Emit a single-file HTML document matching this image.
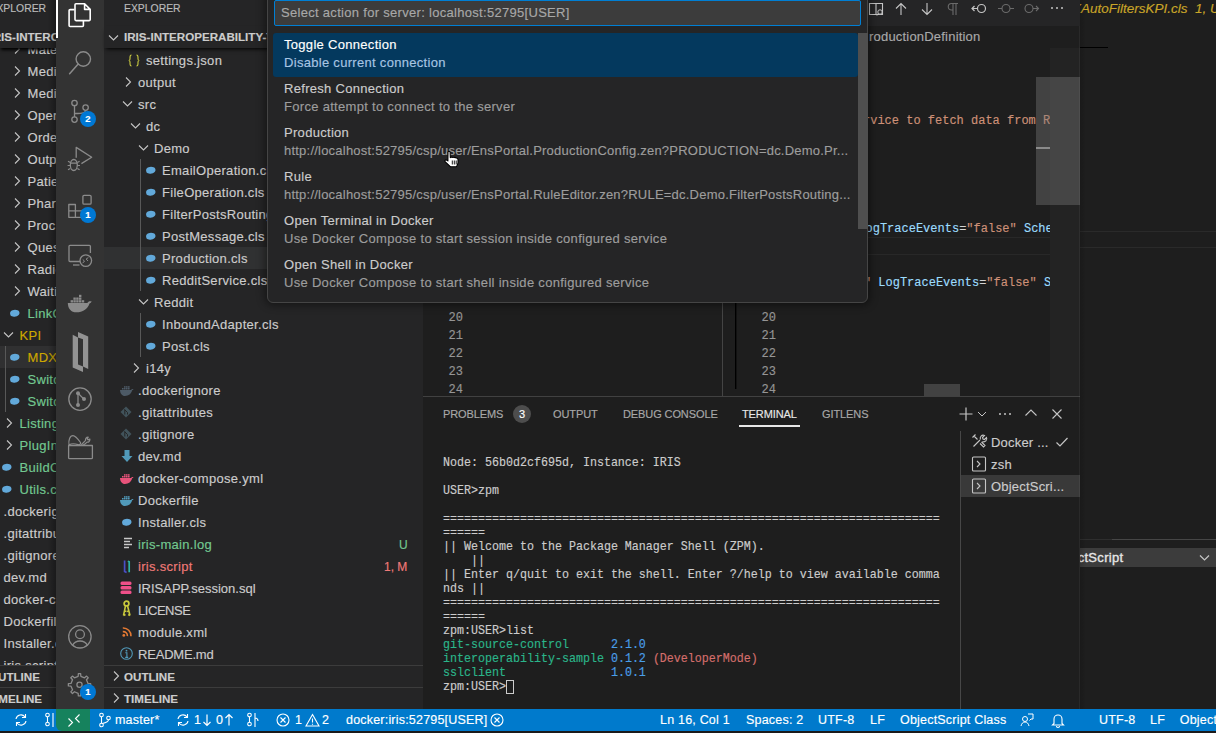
<!DOCTYPE html><html><head><meta charset="utf-8"><style>
*{box-sizing:border-box;margin:0;padding:0}
html,body{width:1216px;height:733px;overflow:hidden;background:#1e1e1e;font-family:"Liberation Sans",sans-serif;color:#cccccc}
.a{position:absolute;white-space:pre}
.m{font-family:"Liberation Mono",monospace}
.r{position:absolute;height:22px;line-height:22px;font-size:13px;color:#cccccc;white-space:pre}
svg{position:absolute;overflow:visible}
.a,.r{-webkit-text-stroke:0.15px currentColor}
</style></head><body>
<div class="a" style="left:0px;top:0px;width:1216px;height:733px;background:#1e1e1e;"></div>
<div class="a" style="left:0px;top:0px;width:56px;height:709px;background:#252526;"></div>
<div class="a" style="left:-10.5px;top:1px;height:16px;line-height:16px;font-size:10.4px;color:#bbbbbb">EXPLORER</div>
<div class="a" style="left:0px;top:346px;width:56px;height:22px;background:#303031;"></div>
<svg width="8" height="12" style="left:13px;top:43px"><path d="M2 1.5L6.5 6 2 10.5" stroke="#c5c5c5" stroke-width="1.1" fill="none"/></svg>
<div class="r" style="left:27.5px;top:39px;color:#cccccc;letter-spacing:0.3px">Mate</div>
<svg width="8" height="12" style="left:13px;top:65px"><path d="M2 1.5L6.5 6 2 10.5" stroke="#c5c5c5" stroke-width="1.1" fill="none"/></svg>
<div class="r" style="left:27.5px;top:61px;color:#cccccc;letter-spacing:0.3px">Medi</div>
<svg width="8" height="12" style="left:13px;top:87px"><path d="M2 1.5L6.5 6 2 10.5" stroke="#c5c5c5" stroke-width="1.1" fill="none"/></svg>
<div class="r" style="left:27.5px;top:83px;color:#cccccc;letter-spacing:0.3px">Medi</div>
<svg width="8" height="12" style="left:13px;top:109px"><path d="M2 1.5L6.5 6 2 10.5" stroke="#c5c5c5" stroke-width="1.1" fill="none"/></svg>
<div class="r" style="left:27.5px;top:105px;color:#cccccc;letter-spacing:0.3px">Oper</div>
<svg width="8" height="12" style="left:13px;top:131px"><path d="M2 1.5L6.5 6 2 10.5" stroke="#c5c5c5" stroke-width="1.1" fill="none"/></svg>
<div class="r" style="left:27.5px;top:127px;color:#cccccc;letter-spacing:0.3px">Orde</div>
<svg width="8" height="12" style="left:13px;top:153px"><path d="M2 1.5L6.5 6 2 10.5" stroke="#c5c5c5" stroke-width="1.1" fill="none"/></svg>
<div class="r" style="left:27.5px;top:149px;color:#cccccc;letter-spacing:0.3px">Outp</div>
<svg width="8" height="12" style="left:13px;top:175px"><path d="M2 1.5L6.5 6 2 10.5" stroke="#c5c5c5" stroke-width="1.1" fill="none"/></svg>
<div class="r" style="left:27.5px;top:171px;color:#cccccc;letter-spacing:0.3px">Patie</div>
<svg width="8" height="12" style="left:13px;top:197px"><path d="M2 1.5L6.5 6 2 10.5" stroke="#c5c5c5" stroke-width="1.1" fill="none"/></svg>
<div class="r" style="left:27.5px;top:193px;color:#cccccc;letter-spacing:0.3px">Phar</div>
<svg width="8" height="12" style="left:13px;top:219px"><path d="M2 1.5L6.5 6 2 10.5" stroke="#c5c5c5" stroke-width="1.1" fill="none"/></svg>
<div class="r" style="left:27.5px;top:215px;color:#cccccc;letter-spacing:0.3px">Proc</div>
<svg width="8" height="12" style="left:13px;top:241px"><path d="M2 1.5L6.5 6 2 10.5" stroke="#c5c5c5" stroke-width="1.1" fill="none"/></svg>
<div class="r" style="left:27.5px;top:237px;color:#cccccc;letter-spacing:0.3px">Ques</div>
<svg width="8" height="12" style="left:13px;top:263px"><path d="M2 1.5L6.5 6 2 10.5" stroke="#c5c5c5" stroke-width="1.1" fill="none"/></svg>
<div class="r" style="left:27.5px;top:259px;color:#cccccc;letter-spacing:0.3px">Radio</div>
<svg width="8" height="12" style="left:13px;top:285px"><path d="M2 1.5L6.5 6 2 10.5" stroke="#c5c5c5" stroke-width="1.1" fill="none"/></svg>
<div class="r" style="left:27.5px;top:281px;color:#cccccc;letter-spacing:0.3px">Waiti</div>
<svg width="11" height="8" viewBox="0 0 11 8" style="left:9px;top:309px"><path d="M1.2 5.2C0.6 3.6 1.8 1.6 3.6 1.2 5 0.4 7.4 0.5 8.6 1.3 10.2 1.9 10.8 3.4 10.4 4.8 10 6.3 8.4 7.3 6.6 7.5 4.8 7.9 2.6 7.7 1.6 6.6Z" fill="#62a9da"/></svg>
<div class="r" style="left:27.5px;top:303px;color:#73c991;letter-spacing:0.3px">LinkO</div>
<svg width="12" height="8" style="left:3px;top:331px"><path d="M1 1.5L5.5 6 10 1.5" stroke="#c5c5c5" stroke-width="1.1" fill="none"/></svg>
<div class="r" style="left:19.5px;top:325px;color:#cca700;letter-spacing:0.3px">KPI</div>
<svg width="11" height="8" viewBox="0 0 11 8" style="left:9px;top:353px"><path d="M1.2 5.2C0.6 3.6 1.8 1.6 3.6 1.2 5 0.4 7.4 0.5 8.6 1.3 10.2 1.9 10.8 3.4 10.4 4.8 10 6.3 8.4 7.3 6.6 7.5 4.8 7.9 2.6 7.7 1.6 6.6Z" fill="#62a9da"/></svg>
<div class="r" style="left:27.5px;top:347px;color:#cca700;letter-spacing:0.3px">MDX</div>
<svg width="11" height="8" viewBox="0 0 11 8" style="left:9px;top:375px"><path d="M1.2 5.2C0.6 3.6 1.8 1.6 3.6 1.2 5 0.4 7.4 0.5 8.6 1.3 10.2 1.9 10.8 3.4 10.4 4.8 10 6.3 8.4 7.3 6.6 7.5 4.8 7.9 2.6 7.7 1.6 6.6Z" fill="#62a9da"/></svg>
<div class="r" style="left:27.5px;top:369px;color:#73c991;letter-spacing:0.3px">Switc</div>
<svg width="11" height="8" viewBox="0 0 11 8" style="left:9px;top:397px"><path d="M1.2 5.2C0.6 3.6 1.8 1.6 3.6 1.2 5 0.4 7.4 0.5 8.6 1.3 10.2 1.9 10.8 3.4 10.4 4.8 10 6.3 8.4 7.3 6.6 7.5 4.8 7.9 2.6 7.7 1.6 6.6Z" fill="#62a9da"/></svg>
<div class="r" style="left:27.5px;top:391px;color:#73c991;letter-spacing:0.3px">Switc</div>
<svg width="8" height="12" style="left:5px;top:417px"><path d="M2 1.5L6.5 6 2 10.5" stroke="#c5c5c5" stroke-width="1.1" fill="none"/></svg>
<div class="r" style="left:19.5px;top:413px;color:#73c991;letter-spacing:0.3px">Listing</div>
<svg width="8" height="12" style="left:5px;top:439px"><path d="M2 1.5L6.5 6 2 10.5" stroke="#c5c5c5" stroke-width="1.1" fill="none"/></svg>
<div class="r" style="left:19.5px;top:435px;color:#73c991;letter-spacing:0.3px">PlugIn</div>
<svg width="11" height="8" viewBox="0 0 11 8" style="left:1px;top:463px"><path d="M1.2 5.2C0.6 3.6 1.8 1.6 3.6 1.2 5 0.4 7.4 0.5 8.6 1.3 10.2 1.9 10.8 3.4 10.4 4.8 10 6.3 8.4 7.3 6.6 7.5 4.8 7.9 2.6 7.7 1.6 6.6Z" fill="#62a9da"/></svg>
<div class="r" style="left:19.5px;top:457px;color:#73c991;letter-spacing:0.3px">BuildC</div>
<svg width="11" height="8" viewBox="0 0 11 8" style="left:1px;top:485px"><path d="M1.2 5.2C0.6 3.6 1.8 1.6 3.6 1.2 5 0.4 7.4 0.5 8.6 1.3 10.2 1.9 10.8 3.4 10.4 4.8 10 6.3 8.4 7.3 6.6 7.5 4.8 7.9 2.6 7.7 1.6 6.6Z" fill="#62a9da"/></svg>
<div class="r" style="left:19.5px;top:479px;color:#73c991;letter-spacing:0.3px">Utils.c</div>
<div class="r" style="left:3.5px;top:501px;color:#cccccc;letter-spacing:0.3px">.dockerig</div>
<div class="r" style="left:3.5px;top:523px;color:#cccccc;letter-spacing:0.3px">.gitattribu</div>
<div class="r" style="left:3.5px;top:545px;color:#cccccc;letter-spacing:0.3px">.gitignore</div>
<div class="r" style="left:3.5px;top:567px;color:#cccccc;letter-spacing:0.3px">dev.md</div>
<div class="r" style="left:3.5px;top:589px;color:#cccccc;letter-spacing:0.3px">docker-c</div>
<div class="r" style="left:3.5px;top:611px;color:#cccccc;letter-spacing:0.3px">Dockerfil</div>
<div class="r" style="left:3.5px;top:633px;color:#cccccc;letter-spacing:0.3px">Installer.c</div>
<div class="r" style="left:3.5px;top:655px;color:#cccccc;letter-spacing:0.3px">iris.script</div>
<div class="a" style="left:5px;top:346px;width:1px;height:66px;background:#585858;"></div>
<div class="a" style="left:0px;top:26px;width:56px;height:22px;background:#252526;box-shadow:0 3px 3px -1px #000"></div>
<div class="a" style="left:-10.5px;top:26px;height:22px;line-height:22px;font-size:11.6px;font-weight:bold;color:#cccccc">IRIS-INTEROPERABILITY</div>
<div class="a" style="left:0px;top:665px;width:56px;height:22px;background:#252526;border-top:1px solid #3c3c3c"></div>
<div class="a" style="left:-11px;top:666px;height:22px;line-height:22px;font-size:11.6px;font-weight:bold;color:#cccccc">OUTLINE</div>
<div class="a" style="left:0px;top:687px;width:56px;height:22px;background:#252526;border-top:1px solid #3c3c3c"></div>
<div class="a" style="left:-12px;top:688px;height:22px;line-height:22px;font-size:11.6px;font-weight:bold;color:#cccccc">TIMELINE</div>
<div class="a" style="left:0px;top:709px;width:70px;height:22px;background:#007acc;"></div>
<div class="a" style="left:0px;top:731px;width:1216px;height:2px;background:#1a1a1a;"></div>
<div class="a" style="left:1080px;top:0px;width:136px;height:709px;background:#1e1e1e;"></div>
<div class="a" style="left:1072px;top:0px;font-size:13.5px;line-height:18px;font-style:italic;color:#c9a528">XAutoFiltersKPI.cls&nbsp; 1, U</div>
<div class="a" style="left:1080px;top:231px;width:136px;height:1px;background:#2a2a2a;"></div>
<div class="a" style="left:1080px;top:247px;width:136px;height:1px;background:#2a2a2a;"></div>
<div class="a" style="left:1080px;top:47px;width:28px;height:1px;background:#000;"></div>
<div class="a" style="left:1080px;top:539px;width:136px;height:1px;background:#464646;"></div>
<div class="a" style="left:1080px;top:539px;width:32px;height:1px;background:#2e2e2e;"></div>
<div class="a" style="left:1080px;top:548px;width:136px;height:19px;background:#3c3c3c;"></div>
<div class="a" style="left:1049px;top:549px;font-size:13px;line-height:18px;color:#e6e6e6;letter-spacing:0.3px;-webkit-text-stroke:0.35px #e6e6e6">ObjectScript</div>
<svg width="12" height="8" style="left:1199px;top:554px"><path d="M1 1.5L5.5 6 10 1.5" stroke="#c5c5c5" stroke-width="1.2" fill="none"/></svg>
<div class="a" style="left:1066px;top:709px;width:150px;height:22px;background:#007acc;"></div>
<div class="a" style="left:48px;top:0px;width:8px;height:709px;background:linear-gradient(to right,rgba(0,0,0,0),rgba(0,0,0,0.3));"></div>
<div class="a" style="left:1080px;top:0px;width:6px;height:709px;background:linear-gradient(to left,rgba(0,0,0,0),rgba(0,0,0,0.15));"></div>
<div class="a" style="left:56px;top:0px;width:48px;height:709px;background:#333333;"></div>
<div class="a" style="left:56px;top:0px;width:2px;height:38px;background:#ffffff;"></div>
<svg width="1216" height="733" style="left:0;top:0"><path d="M76 3.8h8.6l5.6 5.6v10.2a1 1 0 0 1-1 1H76a1 1 0 0 1-1-1V4.8a1 1 0 0 1 1-1z M84.6 3.8v5.6h5.6" fill="none" stroke="#fff" stroke-width="1.6" stroke-linejoin="round"/><path d="M74.5 9.6h-4.4a1 1 0 0 0-1 1v14.9a1 1 0 0 0 1 1h12.3a1 1 0 0 0 1-1v-4.6" fill="none" stroke="#fff" stroke-width="1.6" stroke-linejoin="round"/><circle cx="83.3" cy="59" r="7.2" fill="none" stroke="#8b8b8b" stroke-width="1.4"/><path d="M78.2 64.1L69.6 73.8" stroke="#8b8b8b" stroke-width="1.5" stroke-linecap="round"/><circle cx="74.5" cy="103" r="2.7" fill="none" stroke="#8b8b8b" stroke-width="1.3"/><circle cx="74.5" cy="119.6" r="2.7" fill="none" stroke="#8b8b8b" stroke-width="1.3"/><circle cx="85.6" cy="107.6" r="2.7" fill="none" stroke="#8b8b8b" stroke-width="1.3"/><path d="M74.5 105.7v11.2M85.6 110.3c0 2.5-2 3-11 3.2" fill="none" stroke="#8b8b8b" stroke-width="1.3"/><path d="M76.2 157.7V147.4L91.7 157.2 81.4 163.6" fill="none" stroke="#8b8b8b" stroke-width="1.3" stroke-linejoin="round"/><ellipse cx="73.8" cy="165" rx="3.5" ry="5.5" fill="none" stroke="#8b8b8b" stroke-width="1.3"/><path d="M70.5 163.2h6.6M68 161.3l2.3 1.3M79.6 161.3l-2.3 1.3M67.6 165.5h2.6M77.4 165.5h2.6M68 169.7l2.3-1.3M79.6 169.7l-2.3-1.3" fill="none" stroke="#8b8b8b" stroke-width="1.2"/><path d="M68.8 204.5h6.6v6.4h6.4v6.4H68.8z M68.8 210.9h6.6v6.4" fill="none" stroke="#8b8b8b" stroke-width="1.3" stroke-linejoin="round"/><rect x="82.9" y="195.3" width="8.2" height="8.8" rx="1.2" fill="none" stroke="#8b8b8b" stroke-width="1.3"/><path d="M80 261.5H70a1 1 0 0 1-1-1V246.3a1 1 0 0 1 1-1h19.4a1 1 0 0 1 1 1V253" fill="none" stroke="#8b8b8b" stroke-width="1.3"/><path d="M73 265h6.5" stroke="#8b8b8b" stroke-width="1.3"/><circle cx="85.8" cy="260.6" r="5.8" fill="#333333" stroke="#8b8b8b" stroke-width="1.3"/><path d="M82.8 259.6l1.7 1.4-1.9 2.2M88.3 257.6l-2.2 1.4 1.9 2" fill="none" stroke="#8b8b8b" stroke-width="1"/><path d="M67.8 303h19.6c.8-1.5 2.3-2 4.3-1.4-.5 1-1.2 1.6-2.2 1.8C87.8 309 82.5 312.3 76.5 312.3c-5.5 0-8.5-3.5-8.7-9.3z" fill="#8b8b8b"/><rect x="70.6" y="300.2" width="2.4" height="2.3" fill="#8b8b8b"/><rect x="73.4" y="300.2" width="2.4" height="2.3" fill="#8b8b8b"/><rect x="76.2" y="300.2" width="2.4" height="2.3" fill="#8b8b8b"/><rect x="79" y="300.2" width="2.4" height="2.3" fill="#8b8b8b"/><rect x="81.8" y="300.2" width="2.4" height="2.3" fill="#8b8b8b"/><rect x="73.4" y="297.5" width="2.4" height="2.3" fill="#8b8b8b"/><rect x="76.2" y="297.5" width="2.4" height="2.3" fill="#8b8b8b"/><rect x="79" y="297.5" width="2.4" height="2.3" fill="#8b8b8b"/><rect x="79" y="294.8" width="2.4" height="2.3" fill="#8b8b8b"/><path d="M72.7 334.7L78 337.6V364.6L83 366.6V372L72.7 367.5Z" fill="#939393"/><path d="M78 331.9L88.2 336.4V369.1L83 366.6V339.2L78 337.6Z" fill="#939393"/><circle cx="80" cy="399.1" r="11.2" fill="none" stroke="#8b8b8b" stroke-width="1.3"/><circle cx="78" cy="393.2" r="2" fill="#8b8b8b"/><circle cx="84" cy="399.1" r="2" fill="#8b8b8b"/><circle cx="78" cy="405" r="2" fill="#8b8b8b"/><path d="M78 393.2v11.8M78 393.2l6 5.9" stroke="#8b8b8b" stroke-width="1.3" fill="none"/><path d="M68.6 445.5v12.2a1 1 0 0 0 1 1h21.8a1 1 0 0 0 1-1v-12.2z" fill="none" stroke="#8b8b8b" stroke-width="1.3" stroke-linejoin="round"/><path d="M69 445C68.2 440 70 435.6 73 435.6 75.5 435.6 78 439 80.5 442.5 81 444 79.5 445.2 78 444.6 75 443.6 72 443 69 445Z M81.2 445.2C82.2 443.5 84 442.2 85.6 440.4 85.2 438.6 86.2 437.2 88.2 437.2L87.2 438.9 88.1 439.9 89.9 439.1C90.1 441 88.6 442.5 87 442.1 85.6 443.6 84.2 444.6 82.8 445.3" fill="none" stroke="#8b8b8b" stroke-width="1.2" stroke-linejoin="round"/><circle cx="79.9" cy="636.8" r="11.2" fill="none" stroke="#8b8b8b" stroke-width="1.3"/><circle cx="80" cy="634.3" r="4.4" fill="none" stroke="#8b8b8b" stroke-width="1.3"/><path d="M72.4 645.5c1.5-2.8 4.3-4.5 7.6-4.5s6.1 1.7 7.6 4.5" fill="none" stroke="#8b8b8b" stroke-width="1.3"/><path d="M87.99 683.45 L90.64 683.66 L90.64 685.94 L87.99 686.15 L86.46 689.85 L88.19 691.87 L86.57 693.49 L84.55 691.76 L80.85 693.29 L80.64 695.94 L78.36 695.94 L78.15 693.29 L74.45 691.76 L72.43 693.49 L70.81 691.87 L72.54 689.85 L71.01 686.15 L68.36 685.94 L68.36 683.66 L71.01 683.45 L72.54 679.75 L70.81 677.73 L72.43 676.11 L74.45 677.84 L78.15 676.31 L78.36 673.66 L80.64 673.66 L80.85 676.31 L84.55 677.84 L86.57 676.11 L88.19 677.73 L86.46 679.75Z" fill="none" stroke="#8b8b8b" stroke-width="1.3" stroke-linejoin="round"/><circle cx="79.5" cy="684.8" r="2.6" fill="none" stroke="#8b8b8b" stroke-width="1.3"/></svg>
<div class="a" style="left:80px;top:111px;width:16px;height:16px;border-radius:8px;background:#0078d4;color:#fff;font-size:9.5px;font-weight:bold;line-height:16px;text-align:center">2</div>
<div class="a" style="left:80px;top:207px;width:16px;height:16px;border-radius:8px;background:#0078d4;color:#fff;font-size:9.5px;font-weight:bold;line-height:16px;text-align:center">1</div>
<div class="a" style="left:80px;top:684px;width:16px;height:16px;border-radius:8px;background:#0078d4;color:#fff;font-size:9.5px;font-weight:bold;line-height:16px;text-align:center">1</div>
<div class="a" style="left:104px;top:0px;width:319px;height:709px;background:#252526;"></div>
<div class="a" style="left:124px;top:1px;height:16px;line-height:16px;font-size:10.4px;color:#bbbbbb">EXPLORER</div>
<div class="a" style="left:104px;top:26px;width:319px;height:22px;background:#252526;box-shadow:0 3px 4px -2px #000"></div>
<svg width="12" height="8" style="left:108px;top:34px"><path d="M1 1.5L5.5 6 10 1.5" stroke="#c5c5c5" stroke-width="1.1" fill="none"/></svg>
<div class="a" style="left:124px;top:26px;height:22px;line-height:22px;font-size:11.6px;font-weight:bold;color:#cccccc;width:146px;overflow:hidden">IRIS-INTEROPERABILITY-T</div>
<div class="a" style="left:104px;top:247px;width:319px;height:22px;background:#303132;"></div>
<div class="a" style="left:140px;top:159px;width:1px;height:132px;background:#585858;"></div>
<div class="a" style="left:140px;top:313px;width:1px;height:44px;background:#585858;"></div>
<svg width="12" height="13" viewBox="0 0 12 13" style="left:128px;top:54px"><path d="M3.5 1C2 1 2 2 2 3.5v1.5C2 6 1.5 6.5 0.7 6.5 1.5 6.5 2 7 2 8v1.5C2 11 2 12 3.5 12M8.5 1C10 1 10 2 10 3.5v1.5c0 1 .5 1.5 1.3 1.5-.8 0-1.3.5-1.3 1.5v1.5c0 1.5 0 2.5-1.5 2.5" fill="none" stroke="#cbcb41" stroke-width="1.1"/></svg>
<div class="r" style="left:146px;top:50px;color:#cccccc;letter-spacing:0.3px">settings.json</div>
<svg width="8" height="12" style="left:124px;top:76px"><path d="M2 1.5L6.5 6 2 10.5" stroke="#c5c5c5" stroke-width="1.1" fill="none"/></svg>
<div class="r" style="left:138px;top:72px;color:#cccccc;letter-spacing:0.3px">output</div>
<svg width="12" height="8" style="left:122px;top:100px"><path d="M1 1.5L5.5 6 10 1.5" stroke="#c5c5c5" stroke-width="1.1" fill="none"/></svg>
<div class="r" style="left:138px;top:94px;color:#cccccc;letter-spacing:0.3px">src</div>
<svg width="12" height="8" style="left:130px;top:122px"><path d="M1 1.5L5.5 6 10 1.5" stroke="#c5c5c5" stroke-width="1.1" fill="none"/></svg>
<div class="r" style="left:146px;top:116px;color:#cccccc;letter-spacing:0.3px">dc</div>
<svg width="12" height="8" style="left:138px;top:144px"><path d="M1 1.5L5.5 6 10 1.5" stroke="#c5c5c5" stroke-width="1.1" fill="none"/></svg>
<div class="r" style="left:154px;top:138px;color:#cccccc;letter-spacing:0.3px">Demo</div>
<svg width="11" height="8" viewBox="0 0 11 8" style="left:144.5px;top:166px"><path d="M1.2 5.2C0.6 3.6 1.8 1.6 3.6 1.2 5 0.4 7.4 0.5 8.6 1.3 10.2 1.9 10.8 3.4 10.4 4.8 10 6.3 8.4 7.3 6.6 7.5 4.8 7.9 2.6 7.7 1.6 6.6Z" fill="#62a9da"/></svg>
<div class="r" style="left:162px;top:160px;color:#cccccc;letter-spacing:0.3px">EmailOperation.cls</div>
<svg width="11" height="8" viewBox="0 0 11 8" style="left:144.5px;top:188px"><path d="M1.2 5.2C0.6 3.6 1.8 1.6 3.6 1.2 5 0.4 7.4 0.5 8.6 1.3 10.2 1.9 10.8 3.4 10.4 4.8 10 6.3 8.4 7.3 6.6 7.5 4.8 7.9 2.6 7.7 1.6 6.6Z" fill="#62a9da"/></svg>
<div class="r" style="left:162px;top:182px;color:#cccccc;letter-spacing:0.3px">FileOperation.cls</div>
<svg width="11" height="8" viewBox="0 0 11 8" style="left:144.5px;top:210px"><path d="M1.2 5.2C0.6 3.6 1.8 1.6 3.6 1.2 5 0.4 7.4 0.5 8.6 1.3 10.2 1.9 10.8 3.4 10.4 4.8 10 6.3 8.4 7.3 6.6 7.5 4.8 7.9 2.6 7.7 1.6 6.6Z" fill="#62a9da"/></svg>
<div class="r" style="left:162px;top:204px;color:#cccccc;letter-spacing:0.3px">FilterPostsRoutingRule.cls</div>
<svg width="11" height="8" viewBox="0 0 11 8" style="left:144.5px;top:232px"><path d="M1.2 5.2C0.6 3.6 1.8 1.6 3.6 1.2 5 0.4 7.4 0.5 8.6 1.3 10.2 1.9 10.8 3.4 10.4 4.8 10 6.3 8.4 7.3 6.6 7.5 4.8 7.9 2.6 7.7 1.6 6.6Z" fill="#62a9da"/></svg>
<div class="r" style="left:162px;top:226px;color:#cccccc;letter-spacing:0.3px">PostMessage.cls</div>
<svg width="11" height="8" viewBox="0 0 11 8" style="left:144.5px;top:254px"><path d="M1.2 5.2C0.6 3.6 1.8 1.6 3.6 1.2 5 0.4 7.4 0.5 8.6 1.3 10.2 1.9 10.8 3.4 10.4 4.8 10 6.3 8.4 7.3 6.6 7.5 4.8 7.9 2.6 7.7 1.6 6.6Z" fill="#62a9da"/></svg>
<div class="r" style="left:162px;top:248px;color:#cccccc;letter-spacing:0.3px">Production.cls</div>
<svg width="11" height="8" viewBox="0 0 11 8" style="left:144.5px;top:276px"><path d="M1.2 5.2C0.6 3.6 1.8 1.6 3.6 1.2 5 0.4 7.4 0.5 8.6 1.3 10.2 1.9 10.8 3.4 10.4 4.8 10 6.3 8.4 7.3 6.6 7.5 4.8 7.9 2.6 7.7 1.6 6.6Z" fill="#62a9da"/></svg>
<div class="r" style="left:162px;top:270px;color:#cccccc;letter-spacing:0.3px">RedditService.cls</div>
<svg width="12" height="8" style="left:138px;top:298px"><path d="M1 1.5L5.5 6 10 1.5" stroke="#c5c5c5" stroke-width="1.1" fill="none"/></svg>
<div class="r" style="left:154px;top:292px;color:#cccccc;letter-spacing:0.3px">Reddit</div>
<svg width="11" height="8" viewBox="0 0 11 8" style="left:144.5px;top:320px"><path d="M1.2 5.2C0.6 3.6 1.8 1.6 3.6 1.2 5 0.4 7.4 0.5 8.6 1.3 10.2 1.9 10.8 3.4 10.4 4.8 10 6.3 8.4 7.3 6.6 7.5 4.8 7.9 2.6 7.7 1.6 6.6Z" fill="#62a9da"/></svg>
<div class="r" style="left:162px;top:314px;color:#cccccc;letter-spacing:0.3px">InboundAdapter.cls</div>
<svg width="11" height="8" viewBox="0 0 11 8" style="left:144.5px;top:342px"><path d="M1.2 5.2C0.6 3.6 1.8 1.6 3.6 1.2 5 0.4 7.4 0.5 8.6 1.3 10.2 1.9 10.8 3.4 10.4 4.8 10 6.3 8.4 7.3 6.6 7.5 4.8 7.9 2.6 7.7 1.6 6.6Z" fill="#62a9da"/></svg>
<div class="r" style="left:162px;top:336px;color:#cccccc;letter-spacing:0.3px">Post.cls</div>
<svg width="8" height="12" style="left:132px;top:362px"><path d="M2 1.5L6.5 6 2 10.5" stroke="#c5c5c5" stroke-width="1.1" fill="none"/></svg>
<div class="r" style="left:146px;top:358px;color:#cccccc;letter-spacing:0.3px">i14y</div>
<svg width="16" height="14" viewBox="0 0 16 14" style="left:119px;top:383px"><path d="M1 7h11c.6-1 1.5-1.2 2.5-.8-.4.7-.8 1-1.4 1.1C12.5 10.8 9.5 13 6 13 3 13 1.2 10.5 1 7z" fill="#4d5a66"/><rect x="3" y="5" width="1.6" height="1.5" fill="#4d5a66"/><rect x="5" y="5" width="1.6" height="1.5" fill="#4d5a66"/><rect x="7" y="5" width="1.6" height="1.5" fill="#4d5a66"/><rect x="9" y="5" width="1.6" height="1.5" fill="#4d5a66"/><rect x="5" y="3.2" width="1.6" height="1.5" fill="#4d5a66"/><rect x="7" y="3.2" width="1.6" height="1.5" fill="#4d5a66"/><rect x="9" y="3.2" width="1.6" height="1.5" fill="#4d5a66"/></svg>
<div class="r" style="left:138px;top:380px;color:#cccccc;letter-spacing:0.3px">.dockerignore</div>
<svg width="12" height="12" viewBox="0 0 12 12" style="left:120px;top:406px"><path d="M6 0.5L11.5 6 6 11.5 0.5 6z" fill="#41535b"/><path d="M4.5 3.5l3 3M4.8 3.5v5M7.5 6.5v2" stroke="#252526" stroke-width="1"/></svg>
<div class="r" style="left:138px;top:402px;color:#cccccc;letter-spacing:0.3px">.gitattributes</div>
<svg width="12" height="12" viewBox="0 0 12 12" style="left:120px;top:428px"><path d="M6 0.5L11.5 6 6 11.5 0.5 6z" fill="#41535b"/><path d="M4.5 3.5l3 3M4.8 3.5v5M7.5 6.5v2" stroke="#252526" stroke-width="1"/></svg>
<div class="r" style="left:138px;top:424px;color:#cccccc;letter-spacing:0.3px">.gitignore</div>
<svg width="12" height="14" viewBox="0 0 12 14" style="left:120.5px;top:449px"><path d="M3.5 1h5v6h3L6 13 0.5 7h3z" fill="#519aba"/></svg>
<div class="r" style="left:138px;top:446px;color:#cccccc;letter-spacing:0.3px">dev.md</div>
<svg width="16" height="14" viewBox="0 0 16 14" style="left:119px;top:471px"><path d="M1 7h11c.6-1 1.5-1.2 2.5-.8-.4.7-.8 1-1.4 1.1C12.5 10.8 9.5 13 6 13 3 13 1.2 10.5 1 7z" fill="#e8537a"/><rect x="3" y="5" width="1.6" height="1.5" fill="#e8537a"/><rect x="5" y="5" width="1.6" height="1.5" fill="#e8537a"/><rect x="7" y="5" width="1.6" height="1.5" fill="#e8537a"/><rect x="9" y="5" width="1.6" height="1.5" fill="#e8537a"/><rect x="5" y="3.2" width="1.6" height="1.5" fill="#e8537a"/><rect x="7" y="3.2" width="1.6" height="1.5" fill="#e8537a"/><rect x="9" y="3.2" width="1.6" height="1.5" fill="#e8537a"/></svg>
<div class="r" style="left:138px;top:468px;color:#cccccc;letter-spacing:0.3px">docker-compose.yml</div>
<svg width="16" height="14" viewBox="0 0 16 14" style="left:119px;top:493px"><path d="M1 7h11c.6-1 1.5-1.2 2.5-.8-.4.7-.8 1-1.4 1.1C12.5 10.8 9.5 13 6 13 3 13 1.2 10.5 1 7z" fill="#519aba"/><rect x="3" y="5" width="1.6" height="1.5" fill="#519aba"/><rect x="5" y="5" width="1.6" height="1.5" fill="#519aba"/><rect x="7" y="5" width="1.6" height="1.5" fill="#519aba"/><rect x="9" y="5" width="1.6" height="1.5" fill="#519aba"/><rect x="5" y="3.2" width="1.6" height="1.5" fill="#519aba"/><rect x="7" y="3.2" width="1.6" height="1.5" fill="#519aba"/><rect x="9" y="3.2" width="1.6" height="1.5" fill="#519aba"/></svg>
<div class="r" style="left:138px;top:490px;color:#cccccc;letter-spacing:0.3px">Dockerfile</div>
<svg width="11" height="8" viewBox="0 0 11 8" style="left:120.5px;top:518px"><path d="M1.2 5.2C0.6 3.6 1.8 1.6 3.6 1.2 5 0.4 7.4 0.5 8.6 1.3 10.2 1.9 10.8 3.4 10.4 4.8 10 6.3 8.4 7.3 6.6 7.5 4.8 7.9 2.6 7.7 1.6 6.6Z" fill="#62a9da"/></svg>
<div class="r" style="left:138px;top:512px;color:#cccccc;letter-spacing:0.3px">Installer.cls</div>
<svg width="11" height="13" viewBox="0 0 11 13" style="left:123px;top:537px"><path d="M1 1.5h8M1 4.5h6M1 7.5h8M1 10.5h5" stroke="#c8c8c8" stroke-width="1.4"/></svg>
<div class="r" style="left:138px;top:534px;color:#73c991;letter-spacing:0.3px">iris-main.log</div>
<svg width="8" height="13" viewBox="0 0 8 13" style="left:123px;top:560px"><path d="M1.6 0.5v11l2 1" fill="none" stroke="#4a4fc8" stroke-width="1.7"/><path d="M4.8 1.2l1.4 .6v10.5" fill="none" stroke="#2fb3a6" stroke-width="1.7"/></svg>
<div class="r" style="left:138px;top:556px;color:#f07a78;letter-spacing:0.3px">iris.script</div>
<svg width="12" height="14" viewBox="0 0 12 14" style="left:120px;top:581px"><rect x="0.5" y="0.5" width="11" height="3.6" rx="1.5" fill="#f0508a"/><rect x="0.5" y="5" width="11" height="3.6" rx="1.5" fill="#f0508a"/><rect x="0.5" y="9.5" width="11" height="3.6" rx="1.5" fill="#f0508a"/></svg>
<div class="r" style="left:138px;top:578px;color:#cccccc;letter-spacing:0px">IRISAPP.session.sql</div>
<svg width="11" height="18" viewBox="0 0 11 18" style="left:121px;top:600px"><circle cx="5.5" cy="3.5" r="2.4" fill="none" stroke="#c8c83c" stroke-width="1.7"/><path d="M4.5 5.8L2.5 15.5M6.5 5.8l2.5 9.7M2.5 15.5l2-1M9 15.5l-1.8-1M3.5 11l2 .5M8 11l-2 .5" fill="none" stroke="#c8c83c" stroke-width="1.6"/></svg>
<div class="r" style="left:138px;top:600px;color:#cccccc;letter-spacing:-0.45px">LICENSE</div>
<svg width="11" height="11" viewBox="0 0 11 11" style="left:122px;top:627px"><circle cx="1.8" cy="8.4" r="1.4" fill="#e37933"/><path d="M0.8 4.6a4.2 4.2 0 0 1 4.6 4.6M0.8 1a7.8 7.8 0 0 1 8.2 8.2" fill="none" stroke="#e37933" stroke-width="1.6"/></svg>
<div class="r" style="left:138px;top:622px;color:#cccccc;letter-spacing:0.3px">module.xml</div>
<svg width="14" height="14" viewBox="0 0 14 14" style="left:120px;top:647px"><circle cx="6.5" cy="6.5" r="5.8" fill="none" stroke="#519aba" stroke-width="1.1"/><circle cx="6.5" cy="3.7" r="0.9" fill="#519aba"/><path d="M5.3 5.8h1.6v4.4M5.2 10.4h3" stroke="#519aba" stroke-width="1.1" fill="none"/></svg>
<div class="r" style="left:138px;top:644px;color:#cccccc;letter-spacing:-0.2px">README.md</div>
<div class="a" style="left:399px;top:534px;line-height:22px;font-size:12px;color:#73c991">U</div>
<div class="a" style="left:384px;top:556px;line-height:22px;font-size:12px;color:#f07a78">1, M</div>
<div class="a" style="left:104px;top:665px;width:319px;height:22px;background:#252526;border-top:1px solid #3c3c3c"></div>
<svg width="8" height="12" style="left:112px;top:670px"><path d="M2 1.5L6.5 6 2 10.5" stroke="#c5c5c5" stroke-width="1.1" fill="none"/></svg>
<div class="a" style="left:124px;top:666px;height:22px;line-height:22px;font-size:11.6px;font-weight:bold;color:#cccccc">OUTLINE</div>
<div class="a" style="left:104px;top:687px;width:319px;height:22px;background:#252526;border-top:1px solid #3c3c3c"></div>
<svg width="8" height="12" style="left:112px;top:692px"><path d="M2 1.5L6.5 6 2 10.5" stroke="#c5c5c5" stroke-width="1.1" fill="none"/></svg>
<div class="a" style="left:124px;top:688px;height:22px;line-height:22px;font-size:11.6px;font-weight:bold;color:#cccccc">TIMELINE</div>
<div class="a" style="left:423px;top:0px;width:657px;height:397px;background:#1e1e1e;"></div>
<div class="a" style="left:423px;top:0px;width:657px;height:26px;background:#252526;"></div>
<div class="a" style="left:423px;top:26px;width:657px;height:22px;background:#1e1e1e;"></div>
<div class="a" style="left:869px;top:28px;height:18px;line-height:18px;font-size:13px;color:#a9a9a9;letter-spacing:0.2px">roductionDefinition</div>
<svg width="16" height="16" viewBox="0 0 16 16" style="left:868px;top:1px"><path d="M1.5 2.5h13v11h-13z M8 2.5v11" fill="none" stroke="#c5c5c5" stroke-width="1.1"/><circle cx="12" cy="11" r="2.2" fill="#252526" stroke="#c5c5c5" stroke-width="1"/><path d="M10.4 12.6l-1.8 1.8" stroke="#c5c5c5" stroke-width="1.1"/></svg>
<svg width="16" height="16" viewBox="0 0 16 16" style="left:893px;top:1px"><path d="M8 14V2.5M3 7.5l5-5 5 5" fill="none" stroke="#c5c5c5" stroke-width="1.1"/></svg>
<svg width="16" height="16" viewBox="0 0 16 16" style="left:919px;top:1px"><path d="M8 2v11.5M3 8.5l5 5 5-5" fill="none" stroke="#c5c5c5" stroke-width="1.1"/></svg>
<svg width="16" height="16" viewBox="0 0 16 16" style="left:945px;top:1px"><path d="M8 14V2.5h5M11 2.5V14M8 9H6.5a3.2 3.2 0 0 1 0-6.5H8" fill="none" stroke="#6b6b6b" stroke-width="1.1"/></svg>
<svg width="18" height="18" viewBox="0 0 18 18" style="left:970px;top:0px"><circle cx="11.5" cy="8.5" r="4" fill="none" stroke="#c5c5c5" stroke-width="1.2"/><path d="M7.5 8.5H2M4.5 6l-2.5 2.5 2.5 2.5" fill="none" stroke="#c5c5c5" stroke-width="1.2"/></svg>
<svg width="18" height="18" viewBox="0 0 18 18" style="left:997px;top:0px"><circle cx="9" cy="8.5" r="4" fill="none" stroke="#6b6b6b" stroke-width="1.1"/><path d="M1 8.5h4M13 8.5h4" stroke="#6b6b6b" stroke-width="1.1"/></svg>
<svg width="18" height="18" viewBox="0 0 18 18" style="left:1022px;top:0px"><circle cx="7" cy="8.5" r="4" fill="none" stroke="#6b6b6b" stroke-width="1.1"/><path d="M11 8.5h5.5M14 6l2.5 2.5-2.5 2.5" fill="none" stroke="#6b6b6b" stroke-width="1.1"/></svg>
<div class="a" style="left:1051px;top:7px;width:2px;height:2px;background:#c5c5c5;border-radius:1px"></div>
<div class="a" style="left:1056px;top:7px;width:2px;height:2px;background:#c5c5c5;border-radius:1px"></div>
<div class="a" style="left:1061px;top:7px;width:2px;height:2px;background:#c5c5c5;border-radius:1px"></div>
<div class="a" style="left:722px;top:48px;width:1px;height:349px;background:#444444;"></div>
<div class="a" style="left:723px;top:237px;width:357px;height:18px;background:transparent;border-top:1px solid #282828;border-bottom:1px solid #282828"></div>
<div class="a" style="left:424px;top:237px;width:298px;height:18px;background:transparent;border-top:1px solid #282828;border-bottom:1px solid #282828"></div>
<div class="a m" style="left:848.6px;top:112px;width:201.89999999999998px;overflow:hidden;height:18px;line-height:18px;font-size:12px;transform:scaleY(1.06);transform-origin:0 50%"><span style="color:#ce9178">service to fetch data from Reddit</span></div>
<div class="a m" style="left:858.3px;top:220px;width:192.20000000000005px;overflow:hidden;height:18px;line-height:18px;font-size:12px;transform:scaleY(1.06);transform-origin:0 50%"><span style="color:#9cdcfe">LogTraceEvents</span><span style="color:#d4d4d4">=</span><span style="color:#ce9178">"false"</span><span style="color:#9cdcfe"> Schedule</span></div>
<div class="a m" style="left:863.9px;top:274px;width:186.60000000000002px;overflow:hidden;height:18px;line-height:18px;font-size:12px;transform:scaleY(1.06);transform-origin:0 50%"><span style="color:#ce9178">" </span><span style="color:#9cdcfe">LogTraceEvents</span><span style="color:#d4d4d4">=</span><span style="color:#ce9178">"false"</span><span style="color:#9cdcfe"> Schedule</span></div>
<div class="a m" style="left:448.5px;top:290.5px;height:18px;line-height:18px;font-size:12px;color:#959595">19</div>
<div class="a m" style="left:761.5px;top:290.5px;height:18px;line-height:18px;font-size:12px;color:#959595">19</div>
<div class="a m" style="left:448.5px;top:308.5px;height:18px;line-height:18px;font-size:12px;color:#959595">20</div>
<div class="a m" style="left:761.5px;top:308.5px;height:18px;line-height:18px;font-size:12px;color:#959595">20</div>
<div class="a m" style="left:448.5px;top:326.5px;height:18px;line-height:18px;font-size:12px;color:#959595">21</div>
<div class="a m" style="left:761.5px;top:326.5px;height:18px;line-height:18px;font-size:12px;color:#959595">21</div>
<div class="a m" style="left:448.5px;top:344.5px;height:18px;line-height:18px;font-size:12px;color:#959595">22</div>
<div class="a m" style="left:761.5px;top:344.5px;height:18px;line-height:18px;font-size:12px;color:#959595">22</div>
<div class="a m" style="left:448.5px;top:362.5px;height:18px;line-height:18px;font-size:12px;color:#959595">23</div>
<div class="a m" style="left:761.5px;top:362.5px;height:18px;line-height:18px;font-size:12px;color:#959595">23</div>
<div class="a m" style="left:448.5px;top:380.5px;height:18px;line-height:18px;font-size:12px;color:#959595">24</div>
<div class="a m" style="left:761.5px;top:380.5px;height:18px;line-height:18px;font-size:12px;color:#959595">24</div>
<div class="a" style="left:735px;top:303px;width:1px;height:86px;background:#000000;"></div>
<div class="a" style="left:736px;top:303px;width:1px;height:86px;background:rgba(0,0,0,0.4);"></div>
<div class="a" style="left:1050px;top:48px;width:30px;height:349px;background:#232323;"></div>
<div class="a" style="left:1036px;top:77px;width:44px;height:128px;background:rgba(121,121,121,0.4);"></div>
<div class="a" style="left:1036px;top:147px;width:14px;height:2px;background:#8a8a8a;"></div>
<div class="a" style="left:924px;top:384px;width:36px;height:13px;background:#424242;"></div>
<div class="a" style="left:267px;top:-10px;width:601px;height:313px;background:#252526;border-radius:6px;box-shadow:0 0 8px 2px rgba(0,0,0,0.45);border:1px solid #454545"></div>
<div class="a" style="left:274px;top:0px;width:587px;height:26px;background:#3c3c3c;border:1px solid #007fd4;border-radius:2px"></div>
<div class="a" style="left:281px;top:4px;height:18px;line-height:18px;font-size:13px;color:#a8a8a8;letter-spacing:0.3px">Select action for server: localhost:52795[USER]</div>
<div class="a" style="left:273px;top:33px;width:585px;height:44px;background:#04395e;border-radius:3px"></div>
<div class="a" style="left:858px;top:33px;width:10px;height:196px;background:#4f4f4f;"></div>
<div class="a" style="left:284px;top:36px;height:18px;line-height:18px;font-size:13px;color:#ffffff;letter-spacing:0.3px">Toggle Connection</div>
<div class="a" style="left:284px;top:54px;height:18px;line-height:18px;font-size:13px;color:#a7c5e3;letter-spacing:0.3px">Disable current connection</div>
<div class="a" style="left:284px;top:80px;height:18px;line-height:18px;font-size:13px;color:#cccccc;letter-spacing:0.3px">Refresh Connection</div>
<div class="a" style="left:284px;top:98px;height:18px;line-height:18px;font-size:13px;color:#9d9d9d;letter-spacing:0.3px">Force attempt to connect to the server</div>
<div class="a" style="left:284px;top:124px;height:18px;line-height:18px;font-size:13px;color:#cccccc;letter-spacing:0.3px">Production</div>
<div class="a" style="left:284px;top:142px;height:18px;line-height:18px;font-size:13px;color:#9d9d9d;letter-spacing:0.22px">http://localhost:52795/csp/user/EnsPortal.ProductionConfig.zen?PRODUCTION=dc.Demo.Pr...</div>
<div class="a" style="left:284px;top:168px;height:18px;line-height:18px;font-size:13px;color:#cccccc;letter-spacing:0.3px">Rule</div>
<div class="a" style="left:284px;top:186px;height:18px;line-height:18px;font-size:13px;color:#9d9d9d;letter-spacing:0.22px">http://localhost:52795/csp/user/EnsPortal.RuleEditor.zen?RULE=dc.Demo.FilterPostsRouting...</div>
<div class="a" style="left:284px;top:212px;height:18px;line-height:18px;font-size:13px;color:#cccccc;letter-spacing:0.3px">Open Terminal in Docker</div>
<div class="a" style="left:284px;top:230px;height:18px;line-height:18px;font-size:13px;color:#9d9d9d;letter-spacing:0.3px">Use Docker Compose to start session inside configured service</div>
<div class="a" style="left:284px;top:256px;height:18px;line-height:18px;font-size:13px;color:#cccccc;letter-spacing:0.3px">Open Shell in Docker</div>
<div class="a" style="left:284px;top:274px;height:18px;line-height:18px;font-size:13px;color:#9d9d9d;letter-spacing:0.3px">Use Docker Compose to start shell inside configured service</div>
<svg width="16" height="19" viewBox="0 0 16 19" style="left:444px;top:150px"><path d="M4 2Q5 0.6 6.1 2L6.3 7.6Q7.2 6.8 8.2 7.4Q9.2 6.9 10.2 7.6Q11.3 7.1 12.3 8Q13.8 8 14 9.3L14 12.8Q13.7 15.3 12.2 16.8L6.6 16.8L1.3 11.8Q0.3 10.5 1.6 10Q2.7 9.7 3.9 11Z" fill="#fff" stroke="#000" stroke-width="1.1" stroke-linejoin="round"/><path d="M8.3 10.5v4M10.3 10.5v4M12.2 10.5v4" stroke="#000" stroke-width="0.9"/></svg>
<div class="a" style="left:423px;top:396px;width:657px;height:313px;background:#1e1e1e;border-top:1px solid #414141"></div>
<div class="a" style="left:443px;top:406px;height:16px;line-height:16px;font-size:11px;color:#a8a8a8;letter-spacing:-0.1px">PROBLEMS</div>
<div class="a" style="left:553px;top:406px;height:16px;line-height:16px;font-size:11px;color:#a8a8a8;letter-spacing:-0.1px">OUTPUT</div>
<div class="a" style="left:623px;top:406px;height:16px;line-height:16px;font-size:11px;color:#a8a8a8;letter-spacing:-0.1px">DEBUG CONSOLE</div>
<div class="a" style="left:742px;top:406px;height:16px;line-height:16px;font-size:11px;color:#e7e7e7;letter-spacing:-0.1px">TERMINAL</div>
<div class="a" style="left:822px;top:406px;height:16px;line-height:16px;font-size:11px;color:#a8a8a8;letter-spacing:-0.1px">GITLENS</div>
<div class="a" style="left:513px;top:405px;width:18px;height:18px;border-radius:9px;background:#4d4d4d;color:#fff;font-size:11px;line-height:18px;text-align:center">3</div>
<div class="a" style="left:739px;top:425px;width:61px;height:2px;background:#e7e7e7;"></div>
<svg width="16" height="16" viewBox="0 0 16 16" style="left:958px;top:406px"><path d="M8 1.5v13M1.5 8h13" stroke="#c5c5c5" stroke-width="1.2"/></svg>
<svg width="10" height="8" viewBox="0 0 10 8" style="left:977px;top:410px"><path d="M1 2l4 4 4-4" fill="none" stroke="#c5c5c5" stroke-width="1"/></svg>
<div class="a" style="left:999px;top:413px;width:2px;height:2px;background:#c5c5c5;border-radius:1px"></div>
<div class="a" style="left:1004px;top:413px;width:2px;height:2px;background:#c5c5c5;border-radius:1px"></div>
<div class="a" style="left:1009px;top:413px;width:2px;height:2px;background:#c5c5c5;border-radius:1px"></div>
<svg width="14" height="10" viewBox="0 0 14 10" style="left:1024px;top:408px"><path d="M1.5 7.5l5.5-5.5 5.5 5.5" fill="none" stroke="#c5c5c5" stroke-width="1.1"/></svg>
<svg width="12" height="12" viewBox="0 0 12 12" style="left:1051px;top:408px"><path d="M1.5 1.5l9 9M10.5 1.5l-9 9" stroke="#c5c5c5" stroke-width="1.1"/></svg>
<div class="a" style="left:960px;top:431px;width:1px;height:278px;background:#474747;"></div>
<div class="a" style="left:961px;top:475px;width:119px;height:22px;background:#393939;"></div>
<svg width="16" height="16" viewBox="0 0 16 16" style="left:971px;top:433px"><path d="M2.5 13.5l6.5-6.5M3 3l3.5 3.5M1.5 4.5l3-3M10.5 9l3.5 3.5-1.5 1.5L9 10.5M9.5 6.5a3 3 0 0 1 4-4l-2 2 .5 1.5 1.5.5 2-2a3 3 0 0 1-4 4" fill="none" stroke="#c5c5c5" stroke-width="1.1"/></svg>
<div class="a" style="left:991px;top:434px;height:18px;line-height:18px;font-size:13px;color:#cccccc;letter-spacing:0.2px">Docker ...</div>
<svg width="14" height="14" viewBox="0 0 14 14" style="left:1055px;top:435px"><path d="M1.5 7.5l3.5 3.5 7.5-8" fill="none" stroke="#c5c5c5" stroke-width="1.2"/></svg>
<svg width="16" height="16" viewBox="0 0 16 16" style="left:971px;top:456px"><rect x="1.5" y="1" width="13" height="14" rx="1" fill="none" stroke="#c5c5c5" stroke-width="1.1"/><path d="M6 5l3 3-3 3" fill="none" stroke="#c5c5c5" stroke-width="1.1"/></svg>
<div class="a" style="left:991px;top:456px;height:18px;line-height:18px;font-size:13px;color:#cccccc;letter-spacing:0.2px">zsh</div>
<svg width="16" height="16" viewBox="0 0 16 16" style="left:971px;top:478px"><rect x="1.5" y="1" width="13" height="14" rx="1" fill="none" stroke="#c5c5c5" stroke-width="1.1"/><path d="M6 5l3 3-3 3" fill="none" stroke="#c5c5c5" stroke-width="1.1"/></svg>
<div class="a" style="left:991px;top:478px;height:18px;line-height:18px;font-size:13px;color:#cccccc;letter-spacing:0.2px">ObjectScri...</div>
<div class="a m" style="left:443px;top:456px;height:14px;line-height:14px;font-size:11.67px;color:#cccccc;transform:scaleY(1.14);transform-origin:0 50%"><span style="color:#cccccc">Node: 56b0d2cf695d, Instance: IRIS</span></div>
<div class="a m" style="left:443px;top:484px;height:14px;line-height:14px;font-size:11.67px;color:#cccccc;transform:scaleY(1.14);transform-origin:0 50%"><span style="color:#cccccc">USER&gt;zpm</span></div>
<div class="a m" style="left:443px;top:512px;height:14px;line-height:14px;font-size:11.67px;color:#cccccc;transform:scaleY(1.14);transform-origin:0 50%"><span style="color:#cccccc">=======================================================================</span></div>
<div class="a m" style="left:443px;top:526px;height:14px;line-height:14px;font-size:11.67px;color:#cccccc;transform:scaleY(1.14);transform-origin:0 50%"><span style="color:#cccccc">======</span></div>
<div class="a m" style="left:443px;top:540px;height:14px;line-height:14px;font-size:11.67px;color:#cccccc;transform:scaleY(1.14);transform-origin:0 50%"><span style="color:#cccccc">|| Welcome to the Package Manager Shell (ZPM).</span></div>
<div class="a m" style="left:443px;top:554px;height:14px;line-height:14px;font-size:11.67px;color:#cccccc;transform:scaleY(1.14);transform-origin:0 50%"><span style="color:#cccccc">    ||</span></div>
<div class="a m" style="left:443px;top:568px;height:14px;line-height:14px;font-size:11.67px;color:#cccccc;transform:scaleY(1.14);transform-origin:0 50%"><span style="color:#cccccc">|| Enter q/quit to exit the shell. Enter ?/help to view available comma</span></div>
<div class="a m" style="left:443px;top:582px;height:14px;line-height:14px;font-size:11.67px;color:#cccccc;transform:scaleY(1.14);transform-origin:0 50%"><span style="color:#cccccc">nds ||</span></div>
<div class="a m" style="left:443px;top:596px;height:14px;line-height:14px;font-size:11.67px;color:#cccccc;transform:scaleY(1.14);transform-origin:0 50%"><span style="color:#cccccc">=======================================================================</span></div>
<div class="a m" style="left:443px;top:610px;height:14px;line-height:14px;font-size:11.67px;color:#cccccc;transform:scaleY(1.14);transform-origin:0 50%"><span style="color:#cccccc">======</span></div>
<div class="a m" style="left:443px;top:624px;height:14px;line-height:14px;font-size:11.67px;color:#cccccc;transform:scaleY(1.14);transform-origin:0 50%"><span style="color:#cccccc">zpm:USER&gt;list</span></div>
<div class="a m" style="left:443px;top:638px;height:14px;line-height:14px;font-size:11.67px;color:#cccccc;transform:scaleY(1.14);transform-origin:0 50%"><span style="color:#2bb58a">git-source-control      </span><span style="color:#4a9ee8">2.1.0</span></div>
<div class="a m" style="left:443px;top:652px;height:14px;line-height:14px;font-size:11.67px;color:#cccccc;transform:scaleY(1.14);transform-origin:0 50%"><span style="color:#2bb58a">interoperability-sample </span><span style="color:#4a9ee8">0.1.2 </span><span style="color:#d46e6c">(DeveloperMode)</span></div>
<div class="a m" style="left:443px;top:666px;height:14px;line-height:14px;font-size:11.67px;color:#cccccc;transform:scaleY(1.14);transform-origin:0 50%"><span style="color:#2bb58a">sslclient               </span><span style="color:#4a9ee8">1.0.1</span></div>
<div class="a m" style="left:443px;top:680px;height:14px;line-height:14px;font-size:11.67px;color:#cccccc;transform:scaleY(1.14);transform-origin:0 50%"><span style="color:#cccccc">zpm:USER&gt;</span></div>
<div class="a" style="left:506px;top:680px;width:8px;height:14px;background:transparent;border:1px solid #cccccc"></div>
<div class="a" style="left:1079px;top:26px;width:1px;height:683px;background:rgba(255,255,255,0.05);"></div>
<div class="a" style="left:56px;top:709px;width:1024px;height:22px;background:#007acc;border-radius:0 0 6px 6px"></div>
<div class="a" style="left:56px;top:709px;width:34px;height:22px;background:#16825d;border-radius:0 0 0 6px"></div>
<svg width="14" height="14" viewBox="0 0 14 14" style="left:67px;top:713px"><path d="M1.5 5.5l4 4-4 4M12.5 1.5l-4 4 4 4" fill="none" stroke="#ffffff" stroke-width="1.1"/></svg>
<svg width="14" height="16" viewBox="0 0 14 16" style="left:98px;top:712px"><circle cx="3.5" cy="3" r="1.8" fill="none" stroke="#ffffff" stroke-width="1.1"/><circle cx="3.5" cy="13" r="1.8" fill="none" stroke="#ffffff" stroke-width="1.1"/><circle cx="10.5" cy="6" r="1.8" fill="none" stroke="#ffffff" stroke-width="1.1"/><path d="M3.5 4.8v6.4M10.5 7.8c0 2.5-3 3-6.5 3.7" fill="none" stroke="#ffffff" stroke-width="1.1"/></svg>
<div class="a" style="left:115px;top:711px;height:18px;line-height:18px;font-size:12.5px;color:#fff;letter-spacing:0.2px">master*</div>
<svg width="14" height="14" viewBox="0 0 14 14" style="left:176px;top:713px"><path d="M2 6a5 5 0 0 1 9-2M12 8a5 5 0 0 1-9 2M11.5 1v3.5H8M2.5 13V9.5H6" fill="none" stroke="#ffffff" stroke-width="1.1"/></svg>
<div class="a" style="left:194px;top:711px;height:18px;line-height:18px;font-size:12.5px;color:#fff;letter-spacing:0.2px">1</div>
<div class="a" style="left:216px;top:711px;height:18px;line-height:18px;font-size:12.5px;color:#fff;letter-spacing:0.2px">0</div>
<svg width="10" height="14" viewBox="0 0 10 14" style="left:202px;top:713px"><path d="M5 1.5v11M1.5 9l3.5 3.5L8.5 9" fill="none" stroke="#ffffff" stroke-width="1.2"/></svg>
<svg width="10" height="14" viewBox="0 0 10 14" style="left:224px;top:713px"><path d="M5 12.5v-11M1.5 5L5 1.5 8.5 5" fill="none" stroke="#ffffff" stroke-width="1.2"/></svg>
<svg width="14" height="16" viewBox="0 0 14 16" style="left:246px;top:712px"><circle cx="3.5" cy="3" r="1.8" fill="none" stroke="#ffffff" stroke-width="1.1"/><circle cx="3.5" cy="12" r="1.8" fill="none" stroke="#ffffff" stroke-width="1.1"/><path d="M3.5 4.8v5.4M9 1v14M9 6a3 3 0 0 1 3 3" fill="none" stroke="#ffffff" stroke-width="1.1"/></svg>
<svg width="14" height="14" viewBox="0 0 14 14" style="left:276px;top:713px"><circle cx="7" cy="7" r="6" fill="none" stroke="#ffffff" stroke-width="1.1"/><path d="M4.5 4.5l5 5M9.5 4.5l-5 5" stroke="#ffffff" stroke-width="1.1"/></svg>
<div class="a" style="left:295px;top:711px;height:18px;line-height:18px;font-size:12.5px;color:#fff;letter-spacing:0.2px">1</div>
<svg width="15" height="14" viewBox="0 0 15 14" style="left:305px;top:713px"><path d="M7.5 1.5L14 13H1z" fill="none" stroke="#ffffff" stroke-width="1.1"/><path d="M7.5 5.5v4M7.5 10.8v1" stroke="#ffffff" stroke-width="1.1"/></svg>
<div class="a" style="left:322px;top:711px;height:18px;line-height:18px;font-size:12.5px;color:#fff;letter-spacing:0.2px">2</div>
<div class="a" style="left:346px;top:711px;height:18px;line-height:18px;font-size:12.5px;color:#fff;letter-spacing:0.2px">docker:iris:52795[USER]</div>
<svg width="14" height="14" viewBox="0 0 14 14" style="left:490px;top:713px"><circle cx="7" cy="7" r="6" fill="none" stroke="#ffffff" stroke-width="1.1"/><path d="M4.5 4.5l5 5M9.5 4.5l-5 5" stroke="#ffffff" stroke-width="1.1"/></svg>
<div class="a" style="left:660px;top:711px;height:18px;line-height:18px;font-size:12.5px;color:#fff;letter-spacing:0.2px">Ln 16, Col 1</div>
<div class="a" style="left:746px;top:711px;height:18px;line-height:18px;font-size:12.5px;color:#fff;letter-spacing:0.2px">Spaces: 2</div>
<div class="a" style="left:818px;top:711px;height:18px;line-height:18px;font-size:12.5px;color:#fff;letter-spacing:0.2px">UTF-8</div>
<div class="a" style="left:870px;top:711px;height:18px;line-height:18px;font-size:12.5px;color:#fff;letter-spacing:0.2px">LF</div>
<div class="a" style="left:900px;top:711px;height:18px;line-height:18px;font-size:12.5px;color:#fff;letter-spacing:0.2px">ObjectScript Class</div>
<svg width="14" height="14" viewBox="0 0 14 14" style="left:1020px;top:713px"><circle cx="5" cy="6" r="2.5" fill="none" stroke="#ffffff" stroke-width="1"/><path d="M1 13c.5-2.5 2-4 4-4s3.5 1.5 4 4M8 1h5v5h-2l-1.5 1.5" fill="none" stroke="#ffffff" stroke-width="1"/></svg>
<svg width="14" height="16" viewBox="0 0 14 16" style="left:1051px;top:712px"><path d="M3 11.5V7a4 4 0 0 1 8 0v4.5l1.5 1.5h-11z M5.5 14a1.5 1.5 0 0 0 3 0" fill="none" stroke="#ffffff" stroke-width="1.1"/></svg>
<svg width="14" height="14" viewBox="0 0 14 14" style="left:14px;top:713px"><path d="M2 6a5 5 0 0 1 9-2M12 8a5 5 0 0 1-9 2M11.5 1v3.5H8M2.5 13V9.5H6" fill="none" stroke="#ffffff" stroke-width="1.1"/></svg>
<svg width="14" height="16" viewBox="0 0 14 16" style="left:44px;top:712px"><circle cx="3.5" cy="3" r="1.8" fill="none" stroke="#ffffff" stroke-width="1.1"/><circle cx="3.5" cy="12" r="1.8" fill="none" stroke="#ffffff" stroke-width="1.1"/><path d="M3.5 4.8v5.4M9 1v14" fill="none" stroke="#ffffff" stroke-width="1.1"/></svg>
<div class="a" style="left:1099px;top:711px;height:18px;line-height:18px;font-size:12.5px;color:#fff;letter-spacing:0.2px">UTF-8&nbsp;&nbsp;&nbsp;&nbsp;LF&nbsp;&nbsp;&nbsp;&nbsp;ObjectScript</div></body></html>
